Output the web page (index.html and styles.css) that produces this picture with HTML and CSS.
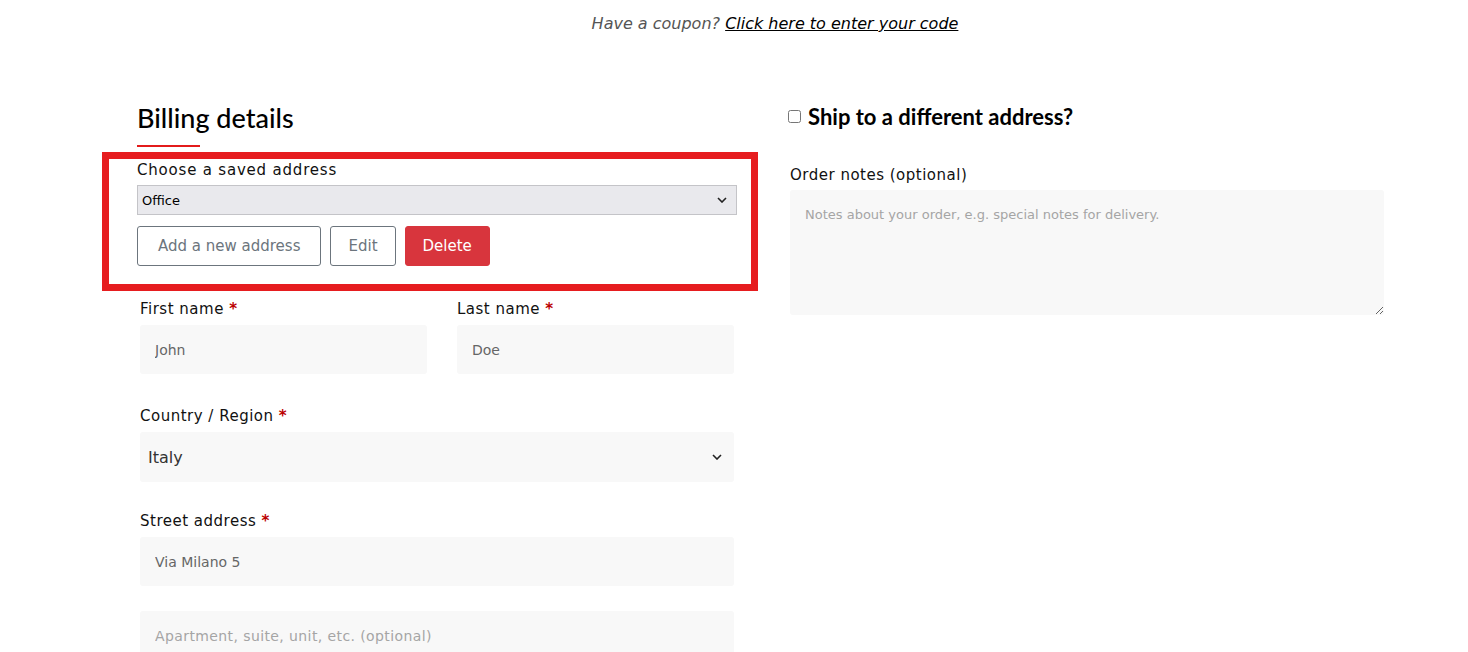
FILE: index.html
```html
<!DOCTYPE html>
<html lang="en">
<head>
    <meta charset="UTF-8">
    <meta name="viewport" content="width=device-width, initial-scale=1.0">
    <title>Checkout</title>
    <link rel="stylesheet" href="styles.css">
</head>
<body>

    <p class="coupon">Have a coupon? <a href="#">Click here to enter your code</a></p>

    <div class="checkout">
        <!-- Billing column -->
        <div class="billing">
            <h3 class="section-title">Billing details</h3>

            <div class="saved-address">
                <label for="saved">Choose a saved address</label>
                <div class="select-wrap saved-select">
                    <select id="saved">
                        <option>Office</option>
                        <option>Home</option>
                    </select>
                    <svg class="chevron" width="10" height="6" viewBox="0 0 10 6"><path d="M1 1l4 4 4-4" fill="none" stroke="#222" stroke-width="1.6"/></svg>
                </div>
                <div class="address-actions">
                    <button class="btn btn-outline btn-add">Add a new address</button>
                    <button class="btn btn-outline">Edit</button>
                    <button class="btn btn-danger">Delete</button>
                </div>
            </div>

            <div class="field-row">
                <div class="field">
                    <label>First name <abbr>*</abbr></label>
                    <input type="text" value="John">
                </div>
                <div class="field">
                    <label>Last name <abbr>*</abbr></label>
                    <input type="text" value="Doe">
                </div>
            </div>

            <div class="field field-country">
                <label>Country / Region <abbr>*</abbr></label>
                <div class="select-wrap country-select">
                    <select>
                        <option>Italy</option>
                    </select>
                    <svg class="chevron" width="10" height="6" viewBox="0 0 10 6"><path d="M1 1l4 4 4-4" fill="none" stroke="#222" stroke-width="1.6"/></svg>
                </div>
            </div>

            <div class="field field-street">
                <label>Street address <abbr>*</abbr></label>
                <input type="text" value="Via Milano 5">
            </div>
            <div class="field">
                <input type="text" placeholder="Apartment, suite, unit, etc. (optional)">
            </div>
        </div>

        <!-- Shipping column -->
        <div class="shipping">
            <h3 class="ship-title">
                <input type="checkbox" id="ship">
                <label for="ship">Ship to a different address?</label>
            </h3>
            <div class="field notes">
                <label>Order notes (optional)</label>
                <textarea placeholder="Notes about your order, e.g. special notes for delivery."></textarea>
            </div>
        </div>
    </div>

</body>
</html>
```

FILE: styles.css
```css
body {
    font-family: "DejaVu Sans", "Open Sans", sans-serif;
    background-color: #fff;
    color: #111;
    margin: 0;
    overflow: hidden;
}

.coupon {
    margin: 0;
    padding-top: 13px;
    line-height: 22px;
    font-size: 16px;
    font-style: italic;
    color: #555;
    text-align: center;
    padding-left: 82px;
}

.coupon a {
    color: #000;
    text-decoration: underline;
}

.checkout {
    display: grid;
    grid-template-columns: 600px 596px;
    column-gap: 51px;
    padding: 68px 0 0 137px;
}

.section-title {
    font-family: "Lato", sans-serif;
    font-size: 27px;
    font-weight: 500;
    line-height: 29px;
    margin: 0 0 5px;
    padding-bottom: 15px;
    position: relative;
    color: #000;
}

.section-title::after {
    content: "";
    position: absolute;
    left: 0;
    bottom: 0;
    width: 63px;
    height: 2px;
    background-color: #e31b1b;
}

/* saved address box */
.saved-address {
    border: 7px solid #e61d1f;
    margin: 0 0 7px -35px;
    padding: 0 14px 18px 28px;
    width: 600px;
}

.saved-address label {
    display: block;
    font-size: 15px;
    line-height: 22px;
    letter-spacing: 0.8px;
    margin-bottom: 4px;
    color: #111;
}

.select-wrap {
    position: relative;
}

.select-wrap select {
    appearance: none;
    -webkit-appearance: none;
    width: 100%;
    font-family: inherit;
    outline: none;
}

.chevron {
    position: absolute;
    top: 50%;
    margin-top: -3px;
}

.saved-select select {
    height: 30px;
    background-color: #e9e9ed;
    border: 1px solid #c4c4c8;
    border-radius: 0;
    font-size: 13px;
    padding: 0 4px;
    color: #000;
}

.saved-select .chevron {
    right: 10px;
}

.address-actions {
    display: flex;
    gap: 9px;
    margin-top: 11px;
}

.btn {
    height: 40px;
    padding: 0 17px;
    font-family: inherit;
    font-size: 15px;
    border-radius: 3px;
    cursor: pointer;
}

.btn-outline {
    background-color: #fff;
    border: 1px solid #6c757d;
    color: #6c757d;
}

.btn-add {
    padding: 0 20px;
}

.btn-danger {
    background-color: #d8353d;
    border: 1px solid #d8353d;
    color: #fff;
}

/* form fields */
.billing .field-row,
.billing > .field {
    margin-left: 3px;
    margin-right: 3px;
}

.field-row {
    display: grid;
    grid-template-columns: 287px 277px;
    column-gap: 30px;
    margin-bottom: 31px;
}

.field label {
    display: block;
    font-size: 15px;
    line-height: 22px;
    letter-spacing: 0.5px;
    margin-bottom: 5px;
    color: #111;
}

.field abbr {
    color: #b00;
    font-weight: 700;
    text-decoration: none;
}

.field input,
.country-select select {
    box-sizing: border-box;
    width: 100%;
    height: 49px;
    border: none;
    border-radius: 3px;
    background-color: #f8f8f8;
    font-family: inherit;
    font-size: 14px;
    color: #666;
    padding: 0 15px;
    outline: none;
}

.field input::placeholder,
.notes textarea::placeholder {
    color: #a5a5a5;
}

.field input::placeholder {
    letter-spacing: 0.4px;
}

.field-country {
    margin-bottom: 28px;
}

.country-select select {
    height: 50px;
    font-size: 16px;
    color: #333;
    padding: 0 8px;
}

.country-select .chevron {
    right: 12px;
}

.field-street {
    margin-bottom: 25px;
}

/* shipping column */
.ship-title {
    display: flex;
    align-items: center;
    gap: 7px;
    margin: 1px 0 0;
    font-family: "Lato", sans-serif;
    font-size: 22px;
    font-weight: 700;
    line-height: 25px;
    color: #000;
}

.ship-title input {
    margin: 0;
    width: 13px;
    height: 13px;
}

.notes {
    margin: 35px 0 0 2px;
}

.notes label {
    margin-bottom: 4px;
}

.notes textarea {
    display: block;
    box-sizing: border-box;
    width: 594px;
    height: 125px;
    border: none;
    border-radius: 3px;
    background-color: #f8f8f8;
    font-family: inherit;
    font-size: 13px;
    padding: 17px 15px;
    outline: none;
    resize: vertical;
}
```
